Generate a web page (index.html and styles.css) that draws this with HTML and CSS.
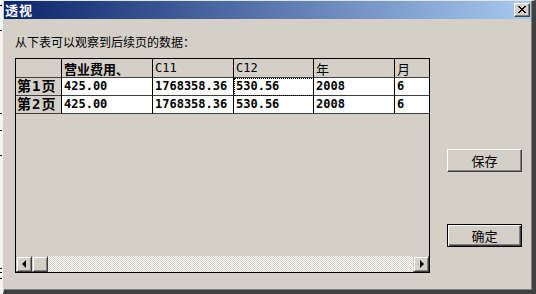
FILE: index.html
```html
<!DOCTYPE html>
<html lang="zh">

<head>
    <meta charset="UTF-8">
    <title>透视</title>
    <link rel="stylesheet" href="styles.css">
</head>

<body>
    <div class="strip"></div>
    <div class="win">
        <div class="titlebar">
            <span class="title">透视</span>
            <span class="close">
                <svg width="8" height="7" viewBox="0 0 8 7">
                    <path d="M0 0h2v1h-2zM6 0h2v1h-2zM1 1h2v1h-2zM5 1h2v1h-2zM2 2h4v1h-4zM3 3h2v1h-2zM2 4h4v1h-4zM1 5h2v1h-2zM5 5h2v1h-2zM0 6h2v1h-2zM6 6h2v1h-2z" fill="#000"/>
                </svg>
            </span>
        </div>
        <div class="content">
            <p class="hint">从下表可以观察到后续页的数据：</p>
            <div class="main">
                <div class="grid">
                    <div class="cells">
                        <div class="cell fixed head"></div>
                        <div class="cell fixed head cjk bold">营业费用、</div>
                        <div class="cell fixed head">C11</div>
                        <div class="cell fixed head">C12</div>
                        <div class="cell fixed head cjk">年</div>
                        <div class="cell fixed head cjk">月</div>

                        <div class="cell fixed rowhead">第1页</div>
                        <div class="cell num">425.00</div>
                        <div class="cell num">1768358.36</div>
                        <div class="cell num focus">530.56</div>
                        <div class="cell num">2008</div>
                        <div class="cell num">6</div>

                        <div class="cell fixed rowhead">第2页</div>
                        <div class="cell num">425.00</div>
                        <div class="cell num">1768358.36</div>
                        <div class="cell num">530.56</div>
                        <div class="cell num">2008</div>
                        <div class="cell num">6</div>
                    </div>
                    <div class="hscroll">
                        <span class="sbtn"><i class="arr left"></i></span>
                        <span class="sbtn"></span>
                        <span class="track"></span>
                        <span class="sbtn"><i class="arr right"></i></span>
                    </div>
                </div>
                <div class="side">
                    <button class="btn save">保存</button>
                    <button class="btn ok">确定</button>
                </div>
            </div>
        </div>
    </div>
</body>

</html>
```

FILE: styles.css
```css
body {
    margin: 0;
    display: flex;
    background: #fff;
    font-family: "Noto Sans CJK SC", "DejaVu Sans", sans-serif;
    font-size: 12px;
    color: #000;
}

p {
    margin: 0;
}

.strip {
    width: 3px;
    height: 294px;
    background:
        linear-gradient(#000, #000) 0 5px / 2px 1px no-repeat,
        linear-gradient(#000, #000) 0 30px / 2px 1px no-repeat,
        linear-gradient(#000, #000) 0 113px / 2px 1px no-repeat,
        linear-gradient(#000, #000) 0 130px / 2px 1px no-repeat,
        linear-gradient(#000, #000) 0 155px / 2px 1px no-repeat,
        linear-gradient(#000, #000) 0 268px / 2px 1px no-repeat,
        linear-gradient(#000, #000) 0 272px / 2px 1px no-repeat,
        linear-gradient(#000, #000) 0 278px / 2px 1px no-repeat,
        #f4f4f4;
}

.win {
    width: 533px;
    height: 294px;
    box-sizing: border-box;
    background: #d4d0c8;
    border-top: 1px solid #e6e4de;
    border-left: 1px solid #d4d0c8;
    border-right: 4px solid #404040;
    border-bottom: 4px solid #404040;
    box-shadow: inset -1px -1px #808080;
    display: flex;
    flex-direction: column;
}

.titlebar {
    height: 18px;
    margin-right: 1px;
    background: linear-gradient(to right, #0a246a, #a6caf0);
    display: flex;
    align-items: center;
    justify-content: space-between;
    padding: 0 1px 0 1px;
}

.title {
    color: #fff;
    font-weight: bold;
    font-size: 13px;
    line-height: 16px;
    letter-spacing: 1px;
}

.close {
    width: 16px;
    height: 14px;
    box-sizing: border-box;
    background: #d4d0c8;
    border-top: 1px solid #fff;
    border-left: 1px solid #fff;
    border-right: 1px solid #404040;
    border-bottom: 1px solid #404040;
    box-shadow: inset -1px -1px #808080;
    display: flex;
    align-items: center;
    justify-content: center;
}

.close svg {
    display: block;
    margin: 0 1px 1px 0;
}

.content {
    padding-left: 11px;
}

.hint {
    margin-top: 16px;
    height: 14px;
    line-height: 14px;
    font-size: 12px;
}

.main {
    display: flex;
    margin-top: 9px;
}

.grid {
    width: 415px;
    height: 215px;
    box-sizing: border-box;
    border: 1px solid #000;
    display: flex;
    flex-direction: column;
    overflow: hidden;
}

.cells {
    flex: 1;
    display: grid;
    grid-template-columns: 46px 91px 81px 80px 81px 80px;
    grid-template-rows: 19px 18px 18px;
    align-content: start;
}

.cell {
    box-sizing: border-box;
    border-right: 1px solid #000;
    border-bottom: 1px solid #404040;
    background: #fff;
    padding-left: 2px;
    white-space: nowrap;
    overflow: hidden;
    font-family: "DejaVu Sans Mono", "Noto Sans CJK SC", monospace;
    font-size: 12px;
    line-height: 17px;
}

.fixed {
    background: #d4d0c8;
}

.head {
    line-height: 19px;
}

.cjk {
    font-family: "Noto Sans CJK SC", sans-serif;
    font-size: 13px;
}

.bold {
    font-weight: bold;
}

.rowhead {
    font-weight: bold;
    font-size: 14px;
    letter-spacing: 1px;
    padding-left: 1px;
}

.num {
    font-weight: bold;
}

.focus {
    outline: 1px dotted #000;
    outline-offset: -1px;
}

.hscroll {
    height: 16px;
    display: flex;
}

.sbtn {
    width: 16px;
    height: 16px;
    box-sizing: border-box;
    background: #d4d0c8;
    border-top: 1px solid #d4d0c8;
    border-left: 1px solid #d4d0c8;
    border-right: 1px solid #404040;
    border-bottom: 1px solid #404040;
    box-shadow: inset 1px 1px #fff, inset -1px -1px #808080;
    display: flex;
    align-items: center;
    justify-content: center;
}

.track {
    flex: 1;
    background: repeating-conic-gradient(#fff 0 25%, #d4d0c8 0 50%) 0 0 / 2px 2px;
}

.arr {
    width: 0;
    height: 0;
    border-top: 4px solid transparent;
    border-bottom: 4px solid transparent;
}

.arr.left {
    border-right: 4px solid #000;
    margin-right: 1px;
}

.arr.right {
    border-left: 4px solid #000;
    margin-left: 1px;
}

.side {
    display: flex;
    flex-direction: column;
    margin-left: 17px;
}

.btn {
    width: 75px;
    height: 23px;
    box-sizing: border-box;
    padding: 0;
    background: #d4d0c8;
    font-family: "Noto Sans CJK SC", sans-serif;
    font-size: 13px;
    color: #000;
    border-top: 1px solid #fff;
    border-left: 1px solid #fff;
    border-right: 1px solid #404040;
    border-bottom: 1px solid #404040;
    box-shadow: inset -1px -1px #808080;
}

.save {
    margin-top: 91px;
}

.ok {
    margin-top: 52px;
    border: 1px solid #000;
    box-shadow: inset 1px 1px #fff, inset -1px -1px #404040, inset -2px -2px #808080;
}
```
